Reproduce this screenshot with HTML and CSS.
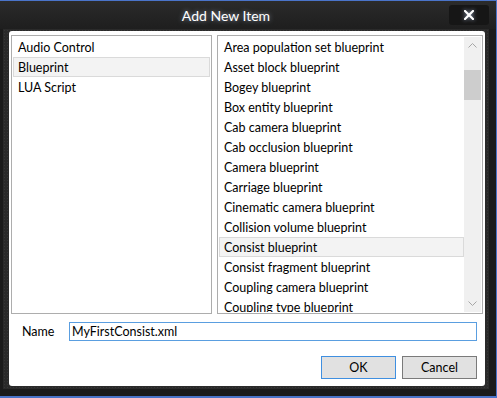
FILE: index.html
```html
<!DOCTYPE html>
<html lang="en">
<head>
    <meta charset="UTF-8">
    <meta name="viewport" content="width=device-width, initial-scale=1.0">
    <title>Add New Item</title>
    <link rel="stylesheet" href="styles.css">
</head>
<body>
  <div class="window">
    <div class="titlebar">
      <div class="title">Add New Item</div>
      <button class="close">
        <svg width="10" height="10" viewBox="0 0 10 10"><path d="M1 1 L9 9 M9 1 L1 9" stroke="#fff" stroke-width="2.2" stroke-linecap="square"/></svg>
      </button>
    </div>
    <div class="frame">
      <div class="panel">
        <div class="lists">
          <div class="listbox categories">
            <div class="item">Audio Control</div>
            <div class="item selected">Blueprint</div>
            <div class="item">LUA Script</div>
          </div>
          <div class="listbox templates">
            <div class="items">
              <div class="item">Area population set blueprint</div>
              <div class="item">Asset block blueprint</div>
              <div class="item">Bogey blueprint</div>
              <div class="item">Box entity blueprint</div>
              <div class="item">Cab camera blueprint</div>
              <div class="item">Cab occlusion blueprint</div>
              <div class="item">Camera blueprint</div>
              <div class="item">Carriage blueprint</div>
              <div class="item">Cinematic camera blueprint</div>
              <div class="item">Collision volume blueprint</div>
              <div class="item selected">Consist blueprint</div>
              <div class="item">Consist fragment blueprint</div>
              <div class="item">Coupling camera blueprint</div>
              <div class="item">Coupling type blueprint</div>
            </div>
            <div class="scrollbar">
              <div class="arrow">
                <svg width="9" height="5" viewBox="0 0 9 5"><path d="M0.5 4.5 L4.5 0.5 L8.5 4.5" fill="none" stroke="#a6a6a6"/></svg>
              </div>
              <div class="track"><div class="thumb"></div></div>
              <div class="arrow">
                <svg width="9" height="5" viewBox="0 0 9 5"><path d="M0.5 0.5 L4.5 4.5 L8.5 0.5" fill="none" stroke="#a6a6a6"/></svg>
              </div>
            </div>
          </div>
        </div>
        <div class="name-row">
          <label class="name-label" for="name">Name</label>
          <input class="name-input" id="name" type="text" value="MyFirstConsist.xml">
        </div>
        <div class="buttons">
          <button class="btn default">OK</button>
          <button class="btn">Cancel</button>
        </div>
      </div>
    </div>
  </div>
</body>
</html>
```

FILE: styles.css
```css
body {
  margin: 0;
  background: #1b1b1b;
  font-family: "Segoe UI", Lato, "Noto Sans", sans-serif;
  font-size: 12.5px;
  color: #000;
}
.window {
  width: 497px;
  height: 398px;
  box-sizing: border-box;
  display: flex;
  flex-direction: column;
  background: #1b1b1b;
  border-top: 1px solid #4a74c9;
  border-right: 1px solid #4a74c9;
  border-bottom: 2px solid #4a74c9;
}
.titlebar {
  height: 28px;
  display: flex;
  align-items: flex-start;
  padding: 0 7px 0 3px;
  background: linear-gradient(#2b2b2b, #1e1e1e);
}
.title {
  flex: 1;
  text-align: center;
  color: #fff;
  font-size: 14px;
  line-height: 29px;
  text-shadow: 0 0 5px rgba(200, 220, 255, 0.6);
}
.close {
  width: 40px;
  height: 20px;
  margin-top: 4px;
  border: 0;
  border-radius: 3px;
  background: #161616;
  display: flex;
  align-items: center;
  justify-content: center;
  padding: 0;
}
.close svg {
  filter: drop-shadow(0 0 2px rgba(200, 220, 255, 0.7));
}
.frame {
  flex: 1;
  margin: 0 7px 7px 3px;
  padding: 2px 4px 3px 6px;
  background-color: #2a2a2a;
  background-image: radial-gradient(#363636 0.7px, transparent 0.9px);
  background-size: 3px 3px;
  display: flex;
}
.panel {
  flex: 1;
  background: #fff;
  border-radius: 3px;
  display: flex;
  flex-direction: column;
  padding: 4px 2px 7px 2px;
}
.lists {
  display: flex;
  gap: 5px;
  height: 279px;
}
.listbox {
  border: 1px solid #adadad;
  padding: 1px;
  overflow: hidden;
}
.categories {
  width: 197px;
}
.templates {
  flex: 1;
  display: flex;
}
.items {
  flex: 1;
  overflow: hidden;
}
.item {
  height: 18px;
  line-height: 19px;
  border: 1px solid transparent;
  padding-left: 4px;
  white-space: nowrap;
}
.item.selected {
  background: #f3f3f3;
  border-color: #dadada;
}
.scrollbar {
  width: 17px;
  background: #f0f0f0;
  display: flex;
  flex-direction: column;
}
.arrow {
  height: 17px;
  display: flex;
  align-items: center;
  justify-content: center;
}
.track {
  flex: 1;
}
.thumb {
  margin-top: 16px;
  height: 30px;
  background: #cdcdcd;
}
.name-row {
  display: flex;
  align-items: center;
  margin-top: 8px;
  padding-left: 11px;
}
.name-label {
  width: 47px;
}
.name-input {
  width: 408px;
  height: 19px;
  box-sizing: border-box;
  border: 1px solid #5a9ee0;
  padding: 0 2px;
  font: inherit;
  color: #000;
  outline: none;
}
.buttons {
  margin-top: auto;
  display: flex;
  justify-content: flex-end;
  gap: 6px;
  padding-right: 6px;
}
.btn {
  width: 75px;
  height: 23px;
  box-sizing: border-box;
  background: #e1e1e1;
  border: 1px solid #7a7a7a;
  font: inherit;
  color: #000;
  padding: 0;
}
.btn.default {
  border-color: #3f8fe0;
}
```
